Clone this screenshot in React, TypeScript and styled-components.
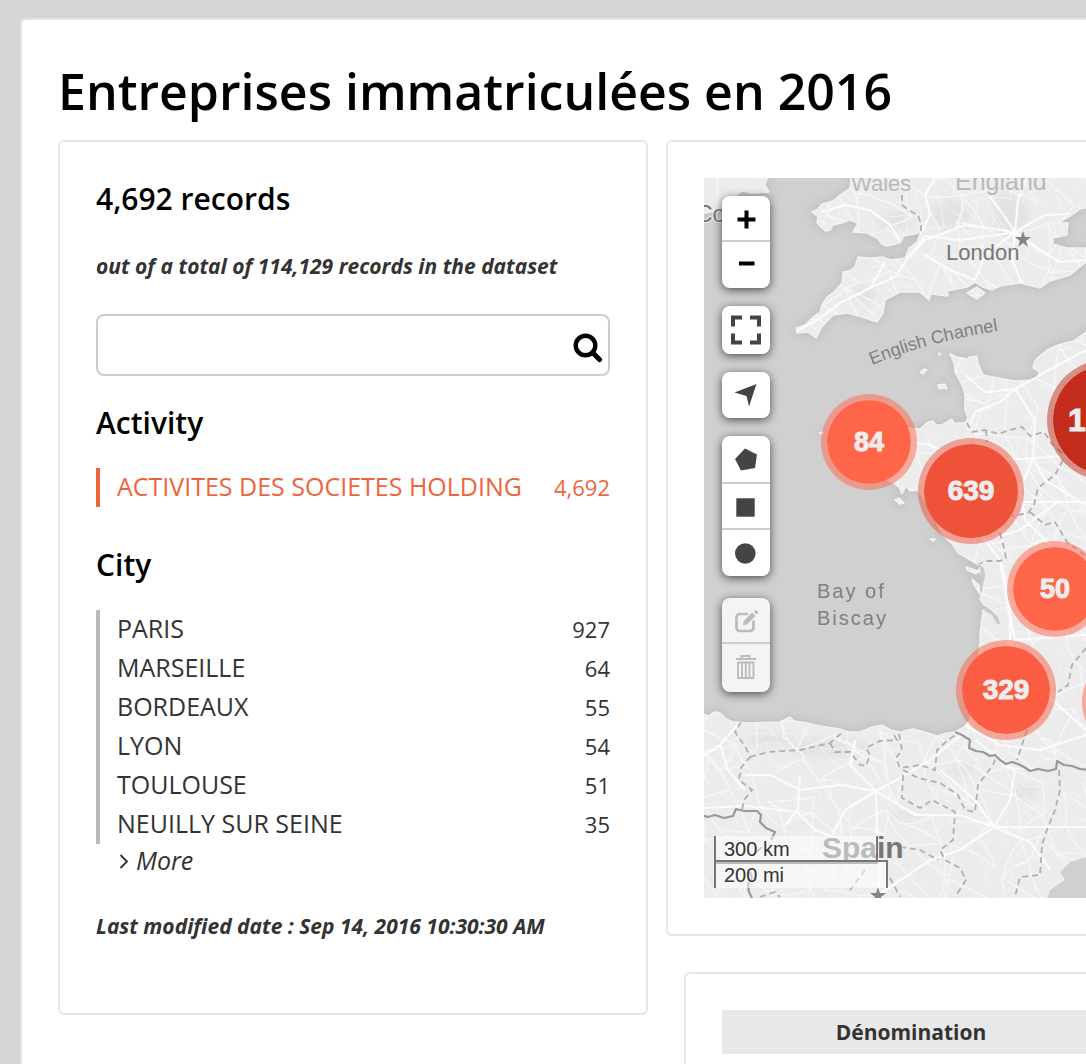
import React from "react";
import styled, { createGlobalStyle, css } from "styled-components";

const GlobalStyle = createGlobalStyle`
  *, *::before, *::after { box-sizing: border-box; }
  body {
    margin: 0;
    background: #d6d6d6;
    color: #333;
    font-family: "Open Sans", "Noto Sans", sans-serif;
  }
  button, input { font: inherit; color: inherit; }
`;

const Page = styled.div`
  display: flex;
  height: 100vh;
  padding: 18px 0 0 20px;
  overflow: hidden;
`;

const Sheet = styled.main`
  flex: 1;
  min-width: 0;
  padding: 36px 0 0 36px;
  background: #fff;
  border: 2px solid #e3e3e3;
  border-width: 2px 0 0 2px;
  border-radius: 6px 0 0 0;
`;

const Title = styled.h1`
  margin: 0 0 14px;
  color: #000;
  font-size: 50px;
  font-weight: 600;
  line-height: 70px;
  white-space: nowrap;
`;

const Columns = styled.div`
  display: grid;
  grid-template-columns: minmax(0, 590px) minmax(0, 1fr);
  column-gap: 18px;
  align-items: start;
`;

const MainColumn = styled.div`
  display: grid;
  row-gap: 36px;
`;

const panel = css`
  border: 2px solid #e5e5e5;
  border-radius: 6px;
  padding: 36px;
`;

const Sidebar = styled.aside`
  ${panel}
  padding-bottom: 72px;
`;

const WidePanel = styled.section<{ $inset?: number }>`
  ${panel}
  margin-left: ${(p) => p.$inset ?? 0}px;
  padding-right: 0;
  border-right: 0;
  border-radius: 6px 0 0 6px;
  overflow: hidden;
`;

const Heading = styled.h2<{ $top?: number; $bottom?: number }>`
  margin: ${(p) => p.$top ?? 0}px 0 ${(p) => p.$bottom ?? 24}px;
  color: #000;
  font-size: 30px;
  font-weight: 600;
  line-height: 42px;
`;

const Note = styled.p`
  margin: 0 0 33px;
  font-size: 21px;
  font-style: italic;
  font-weight: 700;
  line-height: 30px;
  white-space: nowrap;

  &:last-child { margin: 34px 0 0; }
`;

const SearchForm = styled.form`
  display: flex;
  height: 62px;
  border: 2px solid #ccc;
  border-radius: 8px;
`;

const SearchInput = styled.input`
  flex: 1;
  min-width: 0;
  padding: 0 12px;
  border: 0;
  outline: 0;
  background: transparent;
  font-size: 25px;
`;

const SearchButton = styled.button`
  display: grid;
  place-items: center;
  width: 40px;
  padding: 6px 0 0;
  border: 0;
  background: transparent;
  color: #000;
`;

const FacetList = styled.ul<{ $active?: boolean }>`
  margin: 0;
  padding: 0 0 0 17px;
  list-style: none;
  border-left: 4px solid ${(p) => (p.$active ? "#ee643d" : "#bbb")};
  color: ${(p) => (p.$active ? "#ee643d" : "#333")};
`;

const FacetLink = styled.a`
  display: flex;
  justify-content: space-between;
  align-items: baseline;
  padding-bottom: 3px;
  color: inherit;
  font-size: 25px;
  line-height: 36px;
  text-decoration: none;
  white-space: nowrap;
`;

const Count = styled.span`
  font-size: 22px;
  line-height: 30px;
`;

const MoreLink = styled.a`
  display: flex;
  align-items: center;
  gap: 7px;
  padding-left: 23px;
  color: #333;
  font-size: 25px;
  font-style: italic;
  line-height: 33px;
  text-decoration: none;
`;

const MapBox = styled.div`
  position: relative;
  height: 720px;
  overflow: hidden;
  background: #d0d0d0;
  font-family: "Liberation Sans", Arial, sans-serif;
`;

const Tiles = styled.svg`
  position: absolute;
  inset: 0;
  width: 100%;
  height: 100%;
`;

const Controls = styled.div`
  position: absolute;
  top: 18px;
  left: 18px;
  z-index: 2;
  display: grid;
  row-gap: 18px;
  width: 48px;
`;

const Bar = styled.div<{ $disabled?: boolean }>`
  overflow: hidden;
  border-radius: 8px;
  background: ${(p) => (p.$disabled ? "#f4f4f4" : "#fff")};
  box-shadow: 0 2px 10px rgba(0, 0, 0, 0.65);
  ${(p) => p.$disabled && "margin-top: 4px;"}
`;

const Tool = styled.button<{ $h: number }>`
  display: block;
  width: 100%;
  height: ${(p) => p.$h}px;
  padding: 0;
  border: 0;
  background: transparent;

  & + & {
    border-top: 2px solid #ccc;
  }
  svg { display: block; }
`;

const Cluster = styled.button<{ $x: number; $y: number; $r: number; $size: number; $color: string }>`
  position: absolute;
  left: ${(p) => p.$x - p.$r}px;
  top: ${(p) => p.$y - p.$r}px;
  width: ${(p) => p.$r * 2}px;
  height: ${(p) => p.$r * 2}px;
  padding: 0;
  border: 6px solid ${(p) => p.$color}80;
  border-radius: 50%;
  background: ${(p) => p.$color};
  background-clip: padding-box;
  color: #eee;
  font-size: ${(p) => p.$size}px;
  font-weight: 700;
  line-height: 1;
  -webkit-text-stroke: 1px #eee;
`;

const Scale = styled.div`
  position: absolute;
  left: 10px;
  bottom: 10px;
  color: #333;
  font-size: 20px;
  line-height: 26px;
`;

const ScaleLine = styled.div<{ $w: number; $below?: boolean }>`
  width: ${(p) => p.$w}px;
  height: 28px;
  padding-left: 8px;
  border: 2px solid #777;
  background: rgba(255, 255, 255, 0.5);
  ${(p) => (p.$below ? "border-bottom: 0; margin-top: -4px;" : "border-top: 0;")}
`;

const Table = styled.table`
  width: 100%;
  border-collapse: collapse;
  font-size: 21px;
  line-height: 30px;
`;

const Th = styled.th`
  min-width: 378px;
  padding: 7px 0;
  background: #e8e8e8;
  font-weight: 700;
`;

const landPaths = [
  // Ireland
  "M700 170 L770 170 765 185 769 192 752 193 742 191 733 198 724 206 715 211 700 214Z",
  // Great Britain
  "M852 170 L850 188 840 195 833 201 822 204 818 209 812 212 818 217 817 223 825 231 830 230 833 225 842 223 850 220 858 223 853 232 867 233 877 238 882 244 887 246 900 243 904 236 915 234 921 231 917 242 909 248 905 258 890 260 883 257 870 258 858 257 855 267 849 271 843 272 842 283 835 291 827 297 822 305 820 312 813 317 805 325 796 328 797 333 808 332 816 338 822 327 833 315 847 313 862 317 877 322 883 313 885 300 900 292 920 292 929 300 931 294 948 296 947 291 967 287 975 282 983 287 992 290 1000 286 1020 283 1032 286 1040 288 1050 281 1070 275 1086 262 1100 258 1100 248 1067 248 1053 244 1053 238 1067 235 1068 223 1060 222 1072 215 1080 209 1100 205 1100 170Z",
  // Isle of Wight
  "M967 293 L977 287 985 293 977 299Z",
  // Channel Islands
  "M920 372 l4 -3 3 1 -4 4Z M938 385 l7 -1 2 5 -4 -1 -4 1Z M939 353 l2 1 -2 1Z",
  // Small Atlantic islands
  "M895 500 l4 -2 5 5 -4 1Z M930 539 l5 0 -1 2Z M966 567 l12 4 -2 3 -9 -4Z M972 579 l7 6 1 9 -6 -9Z M819 433 l4 -1 0 2Z",
  // France and Spain
  "M950 354 L957 357 968 359 969 357 977 356 978 363 981 370 983 375 993 377 1004 379 1015 381 1030 380 1037 377 1040 372 1033 368 1034 363 1037 358 1047 350 1058 345 1073 341 1086 332 1100 325 1100 910 1044 910 1050 890 1065 880 1060 872 1070 862 1086 857 1100 852 1100 908 700 908 700 713 709 716 714 712 720 713 726 719 733 722 750 723 780 722 790 717 794 721 807 723 820 726 840 729 848 732 860 732 872 727 882 725 891 730 900 732 907 730 913 729 925 732 937 736 947 733 955 732 964 727 970 720 973 706 975 697 977 673 980 643 980 633 983 610 990 608 999 625 998 618 992 609 984 605 980 599 983 590 984 577 978 571 983 563 978 565 972 561 958 553 953 545 946 538 940 530 930 508 918 490 910 491 906 486 902 494 899 487 892 482 878 476 850 470 832 460 838 447 829 440 850 432 870 428 900 427 920 429 928 422 933 421 936 425 942 425 952 419 954 423 965 423 968 418 965 410 965 395 963 387 958 378 955 372 954 363Z",
];

const sea = "M1100 850 L1086 857 1070 862 1060 872 1065 880 1050 890 1044 910 1100 910Z";

const jitter = (a: number, b: number, s: number) => {
  const v = Math.sin(a * 127.1 + b * 311.7 + s * 74.7) * 43758.5453;
  return v - Math.floor(v);
};

// Web of minor roads: neighbouring points of a loose lattice joined by curves.
function roadWeb(step: number, seed: number, keep: number) {
  const at = (i: number, j: number) => [
    700 + (i + (jitter(i, j, seed) - 0.5) * 0.9) * step,
    170 + (j + (jitter(i, j, seed + 1) - 0.5) * 0.9) * step,
  ];
  let d = "";
  for (let i = -1; i * step < 410; i++) {
    for (let j = -1; j * step < 750; j++) {
      const [x, y] = at(i, j);
      [[1, 0], [0, 1], [1, 1]].forEach(([di, dj], k) => {
        if (jitter(i, j, seed + 5 + k) > keep) return;
        const [u, v] = at(i + di, j + dj);
        const cx = (x + u) / 2 + (jitter(i, j, seed + 9 + k) - 0.5) * step * 0.5;
        const cy = (y + v) / 2 + (jitter(i, j, seed + 13 + k) - 0.5) * step * 0.5;
        d += `M${x.toFixed(1)} ${y.toFixed(1)}Q${cx.toFixed(1)} ${cy.toFixed(1)} ${u.toFixed(1)} ${v.toFixed(1)}`;
      });
    }
  }
  return d;
}

const minorRoads = roadWeb(26, 3, 0.6);
const localRoads = roadWeb(17, 31, 0.5);

const majorRoads = [
  "M797 331 L820 318 840 303 870 288 895 277 908 258 925 236 960 240 990 236 1015 232",
  "M920 235 L930 215 925 195 935 178 M1015 232 L1000 210 985 190 975 170 M1015 232 L1018 200 1030 170 M1015 232 L1040 250 1060 262 1086 260 M1015 232 L985 255 975 280 M1015 232 L1012 260 1022 283 M1015 232 L1045 215 1070 214 M908 258 L925 240 965 225 1015 232",
  "M822 212 L845 205 870 210 890 225 900 240 M870 288 L885 262 M925 255 L950 270 975 280",
  "M965 375 L985 392 1015 389 1040 375 1086 350 M1015 389 L1000 402 975 412 968 430 M1015 389 L1035 420 1033 458 1045 480 1086 505 M1033 458 L1000 460 960 460 930 445 900 440 M1033 458 L1020 490 1025 520 1050 545 M1033 458 L1086 455 M960 460 L975 500 985 540 1000 560 1010 600 1010 640",
  "M1024 502 L1086 502 M985 540 L1020 530 1060 500 M1000 560 L1005 590 1015 640 1086 635 M1010 640 L985 690 965 725 M1010 640 L1030 680 1086 730 M965 725 L1000 745 1040 750 1086 735",
  "M965 732 L930 760 900 778 876 791 M704 755 L720 745 740 722 M720 745 L728 770 745 790 M745 775 L770 775 800 790 840 785 876 791 M876 791 L845 810 832 835 M876 791 L877 830 880 870 878 895 M876 791 L850 765 855 740 M800 775 L798 810 785 825 M797 812 L815 830 840 840 M876 791 L915 815 960 815 994 827",
  "M994 827 L960 850 930 860 878 895 M994 827 L1010 800 1015 770 975 740 M994 827 L1030 842 1050 870 M994 827 L1086 827 M994 827 L975 800 940 770 M704 808 L745 806 797 812",
].join(" ");

const regionBorders = [
  "M902 195 L902 205 910 211 918 215 921 224 921 231",
  "M967 423 L972 432 985 430 998 434 1010 430 1022 427 1030 436 1044 432 1052 444 1064 455 M986 430 L987 442",
  "M1063 460 L1055 475 1038 488 1034 505 1028 513 1012 516 M1030 512 L1045 525 1055 522 1067 542 1086 556 M1000 533 L1004 548 1006 558 1000 561 985 561 978 565",
  "M1086 648 L1072 665 1068 685 1058 692 M1027 730 L1022 745 1017 760",
  "M741 722 L735 732 746 748 750 757 741 768 739 780 752 790 744 800 742 810 M750 757 L768 752 800 750 830 743 843 732 M830 743 L835 752 850 752 860 765 866 766 870 755 866 748 880 741 897 740 892 732",
  "M899 734 L902 750 896 758 900 768 920 765 935 770 937 750 948 740 958 733 M903 770 L918 778 940 783 958 795 965 810 975 812 978 785 993 765 996 757 M903 775 L902 798 920 808 932 800 955 812 953 840 940 850 945 860 960 868 966 880 955 897 M900 847 L920 850 938 860 M1059 770 L1060 790 1055 810 1047 830 1042 845 1040 875 1020 877 1015 897 M865 870 L850 890 M890 878 L900 897",
  "M760 897 L775 892 780 897",
].join(" ");

const countryBorders = [
  "M955 732 L962 735 970 740 969 748 976 751 983 752 990 756 995 755 1000 760 1006 764 1012 762 1018 764 1024 767 1030 771 1038 769 1048 771 1056 769 1057 761 1064 765 1072 766 1080 769 1090 770",
  "M700 815 L708 817 715 815 724 818 733 816 736 809 744 811 757 811 761 815 760 822 766 828 775 832 771 840 M762 847 L752 856 M750 872 L752 878 748 884 749 892 752 898",
].join(" ");

function MapTiles() {
  return (
    <Tiles viewBox="704 178 382 720" preserveAspectRatio="xMinYMin slice" aria-label="Map of western Europe">
      <defs>
        <clipPath id="land">
          {landPaths.map((d) => <path key={d} d={d} />)}
        </clipPath>
        <filter id="shore" x="-5%" y="-5%" width="110%" height="110%">
          <feGaussianBlur stdDeviation="4" />
        </filter>
        <filter id="relief">
          <feGaussianBlur stdDeviation="5" />
        </filter>
        <path id="channel" d="M872 365 Q930 341 1004 330" />
      </defs>
      <g filter="url(#shore)" opacity="0.45" fill="#a8a8a8" stroke="#a8a8a8" strokeWidth="4">
        {landPaths.map((d) => <path key={d} d={d} />)}
      </g>
      <g fill="#ececec" stroke="#f1f1f1" strokeWidth="1.5" strokeLinejoin="round">
        {landPaths.map((d) => <path key={d} d={d} />)}
      </g>
      <g clipPath="url(#land)" fill="none">
        <g fill="#e2e2e2" filter="url(#relief)">
          <ellipse cx="830" cy="748" rx="40" ry="8" />
          <ellipse cx="770" cy="740" rx="24" ry="7" />
          <ellipse cx="1024" cy="792" rx="14" ry="6" />
          <ellipse cx="950" cy="215" rx="20" ry="14" />
          <ellipse cx="1010" cy="215" rx="18" ry="22" />
          <ellipse cx="895" cy="220" rx="16" ry="10" />
          <ellipse cx="865" cy="295" rx="14" ry="9" />
          <ellipse cx="905" cy="815" rx="14" ry="5" />
          <ellipse cx="965" cy="770" rx="16" ry="5" />
        </g>
        <path d={localRoads} stroke="#f2f2f2" strokeWidth="1" />
        <path d={minorRoads} stroke="#f6f6f6" strokeWidth="1.4" />
        <path d={majorRoads} stroke="#fbfbfb" strokeWidth="2.2" strokeLinejoin="round" />
        <path d={regionBorders} stroke="#b0b0b0" strokeWidth="1.8" strokeDasharray="6 4" />
        <path d={countryBorders} stroke="#999" strokeWidth="2.2" strokeLinejoin="round" />
      </g>
      <path d={sea} fill="#d0d0d0" />
      <path
        d="M983 607 L990 609 998 617 1000 624 997 624 992 615 985 611Z M980 565 l4 3 1 8 -2 9 -3 4 1 -10Z"
        fill="#cacaca"
      />
      <g fontSize="21" fill="#777" stroke="#eee" strokeWidth="2" paintOrder="stroke">
        <text x="851" y="191" fontSize="22" fill="#b9b9b9">Wales</text>
        <text x="955" y="190" fontSize="25" fill="#b9b9b9">England</text>
        <text x="946" y="260" fontSize="22">London</text>
        <text x="696" y="222" fontSize="23">Cork</text>
        <text x="822" y="858" fontSize="30" fontWeight="700">Spain</text>
      </g>
      <g fontSize="20" fill="#808080">
        <text fontSize="18"><textPath href="#channel">English Channel</textPath></text>
        <text x="817" y="598" letterSpacing="2">Bay of</text>
        <text x="817" y="625" letterSpacing="2">Biscay</text>
      </g>
      <g fill="#85857b">
        <path d="M1023 231 l2 6 h6 l-5 4 2 6 -5 -4 -5 4 2 -6 -5 -4 h6Z" />
        <path d="M878 887 l2 6 h6 l-5 4 2 6 -5 -4 -5 4 2 -6 -5 -4 h6Z" />
      </g>
    </Tiles>
  );
}

const Glyph = ({ children }: { children: React.ReactNode }) => (
  <svg width="48" height="46" viewBox="0 0 48 46" fill="#444" aria-hidden="true">{children}</svg>
);

function MapControls() {
  return (
    <Controls>
      <Bar>
        <Tool $h={44} aria-label="Zoom in">
          <Glyph><path fill="#000" d="M22.5 14.500h4v7h7v4h-7v7h-4v-7h-7v-4h7z" /></Glyph>
        </Tool>
        <Tool $h={48} aria-label="Zoom out">
          <Glyph><path fill="#000" d="M17 19.500h15.500v4H17z" /></Glyph>
        </Tool>
      </Bar>
      <Bar>
        <Tool $h={48} aria-label="Fullscreen">
          <Glyph>
            <path d="M9 8.500h11v4h-7v7H9zM28 8.500h11v11h-4v-7h-7zM9 26.500h4v7h7v4H9zM35 26.500h4v11H28v-4h7z" />
          </Glyph>
        </Tool>
      </Bar>
      <Bar>
        <Tool $h={46} aria-label="Show my location">
          <Glyph><path d="M34.500 12L27 34.500 24.500 24 12.500 20.500Z" /></Glyph>
        </Tool>
      </Bar>
      <Bar>
        <Tool $h={46} aria-label="Draw a polygon">
          <Glyph><path d="M23 12.500L35 18.500 33 32 19 34.500 13 23Z" /></Glyph>
        </Tool>
        <Tool $h={46} aria-label="Draw a rectangle">
          <Glyph><path d="M14.300 14.300h18.400v18.400H14.300z" /></Glyph>
        </Tool>
        <Tool $h={48} aria-label="Draw a circle">
          <Glyph><circle cx="23.300" cy="23.500" r="10.300" /></Glyph>
        </Tool>
      </Bar>
      <Bar $disabled>
        <Tool $h={44} aria-label="Edit layers" disabled>
          <Glyph>
            <path
              d="M26 16H18a3.500 3.500 0 0 0-3.500 3.500v10a3.500 3.500 0 0 0 3.500 3.500h10a3.500 3.500 0 0 0 3.500-3.500v-7"
              fill="none" stroke="#bbb" strokeWidth="2.700"
            />
            <path d="M21 27.500l.8-4.500L30 14.500l3.500 3.500-8 8zM32 14l2-2 2.500 2.500-2 2z" fill="#bbb" />
          </Glyph>
        </Tool>
        <Tool $h={50} aria-label="Delete layers" disabled>
          <Glyph>
            <path
              d="M14 14h20M19.500 14v-3h8v3M16 17.500h15.500v15.500H16zM20 18v15M23.800 18v15M27.500 18v15"
              fill="none" stroke="#bbb" strokeWidth="1.900"
            />
          </Glyph>
        </Tool>
      </Bar>
    </Controls>
  );
}

const cities = [
  ["PARIS", "927"],
  ["MARSEILLE", "64"],
  ["BORDEAUX", "55"],
  ["LYON", "54"],
  ["TOULOUSE", "51"],
  ["NEUILLY SUR SEINE", "35"],
];

const clusters = [
  { x: 165, y: 264, r: 48, size: 27, color: "#ff6649", label: "84" },
  { x: 267, y: 313, r: 53, size: 28, color: "#ee5339", label: "639" },
  { x: 404, y: 242, r: 61, size: 32, color: "#c42d1c", label: "1,548" },
  { x: 351, y: 411, r: 48, size: 27, color: "#ff6649", label: "50" },
  { x: 302, y: 512, r: 50, size: 28, color: "#fa5d41", label: "329" },
  { x: 428, y: 524, r: 50, size: 27, color: "#ff6649", label: "97" },
];

export default function App() {
  return (
    <Page>
      <GlobalStyle />
      <Sheet>
        <Title>Entreprises immatriculées en 2016</Title>
        <Columns>
          <Sidebar>
            <Heading $bottom={31}>4,692 records</Heading>
            <Note>out of a total of 114,129 records in the dataset</Note>
            <SearchForm role="search" onSubmit={(e) => e.preventDefault()}>
              <SearchInput type="text" aria-label="Search records" />
              <SearchButton type="submit" aria-label="Search">
                <svg width="30" height="30" viewBox="0 0 30 30" fill="none" stroke="#000" aria-hidden="true">
                  <circle cx="12.500" cy="12.500" r="9.800" strokeWidth="4.400" />
                  <path d="M20 20l6.500 6.500" strokeWidth="5" strokeLinecap="round" />
                </svg>
              </SearchButton>
            </SearchForm>
            <Heading $top={26}>Activity</Heading>
            <FacetList $active>
              <li>
                <FacetLink href="#activity">
                  ACTIVITES DES SOCIETES HOLDING <Count>4,692</Count>
                </FacetLink>
              </li>
            </FacetList>
            <Heading $top={37}>City</Heading>
            <FacetList>
              {cities.map(([name, count]) => (
                <li key={name}>
                  <FacetLink href="#city">
                    {name} <Count>{count}</Count>
                  </FacetLink>
                </li>
              ))}
            </FacetList>
            <MoreLink href="#more">
              <svg width="10" height="16" viewBox="0 0 10 16" fill="none" stroke="#333" strokeWidth="1.800" aria-hidden="true">
                <path d="M1.500 2L8 8.500l-6.500 6.500" />
              </svg>
              More
            </MoreLink>
            <Note>Last modified date : Sep 14, 2016 10:30:30 AM</Note>
          </Sidebar>
          <MainColumn>
            <WidePanel>
              <MapBox>
                <MapTiles />
                {clusters.map((c) => (
                  <Cluster key={c.label} $x={c.x} $y={c.y} $r={c.r} $size={c.size} $color={c.color}>
                    {c.label}
                  </Cluster>
                ))}
                <Scale>
                  <ScaleLine $w={164}>300 km</ScaleLine>
                  <ScaleLine $w={174} $below>200 mi</ScaleLine>
                </Scale>
                <MapControls />
              </MapBox>
            </WidePanel>
            <WidePanel $inset={18}>
              <Table>
                <thead>
                  <tr>
                    <Th scope="col">Dénomination</Th>
                  </tr>
                </thead>
              </Table>
            </WidePanel>
          </MainColumn>
        </Columns>
      </Sheet>
    </Page>
  );
}
